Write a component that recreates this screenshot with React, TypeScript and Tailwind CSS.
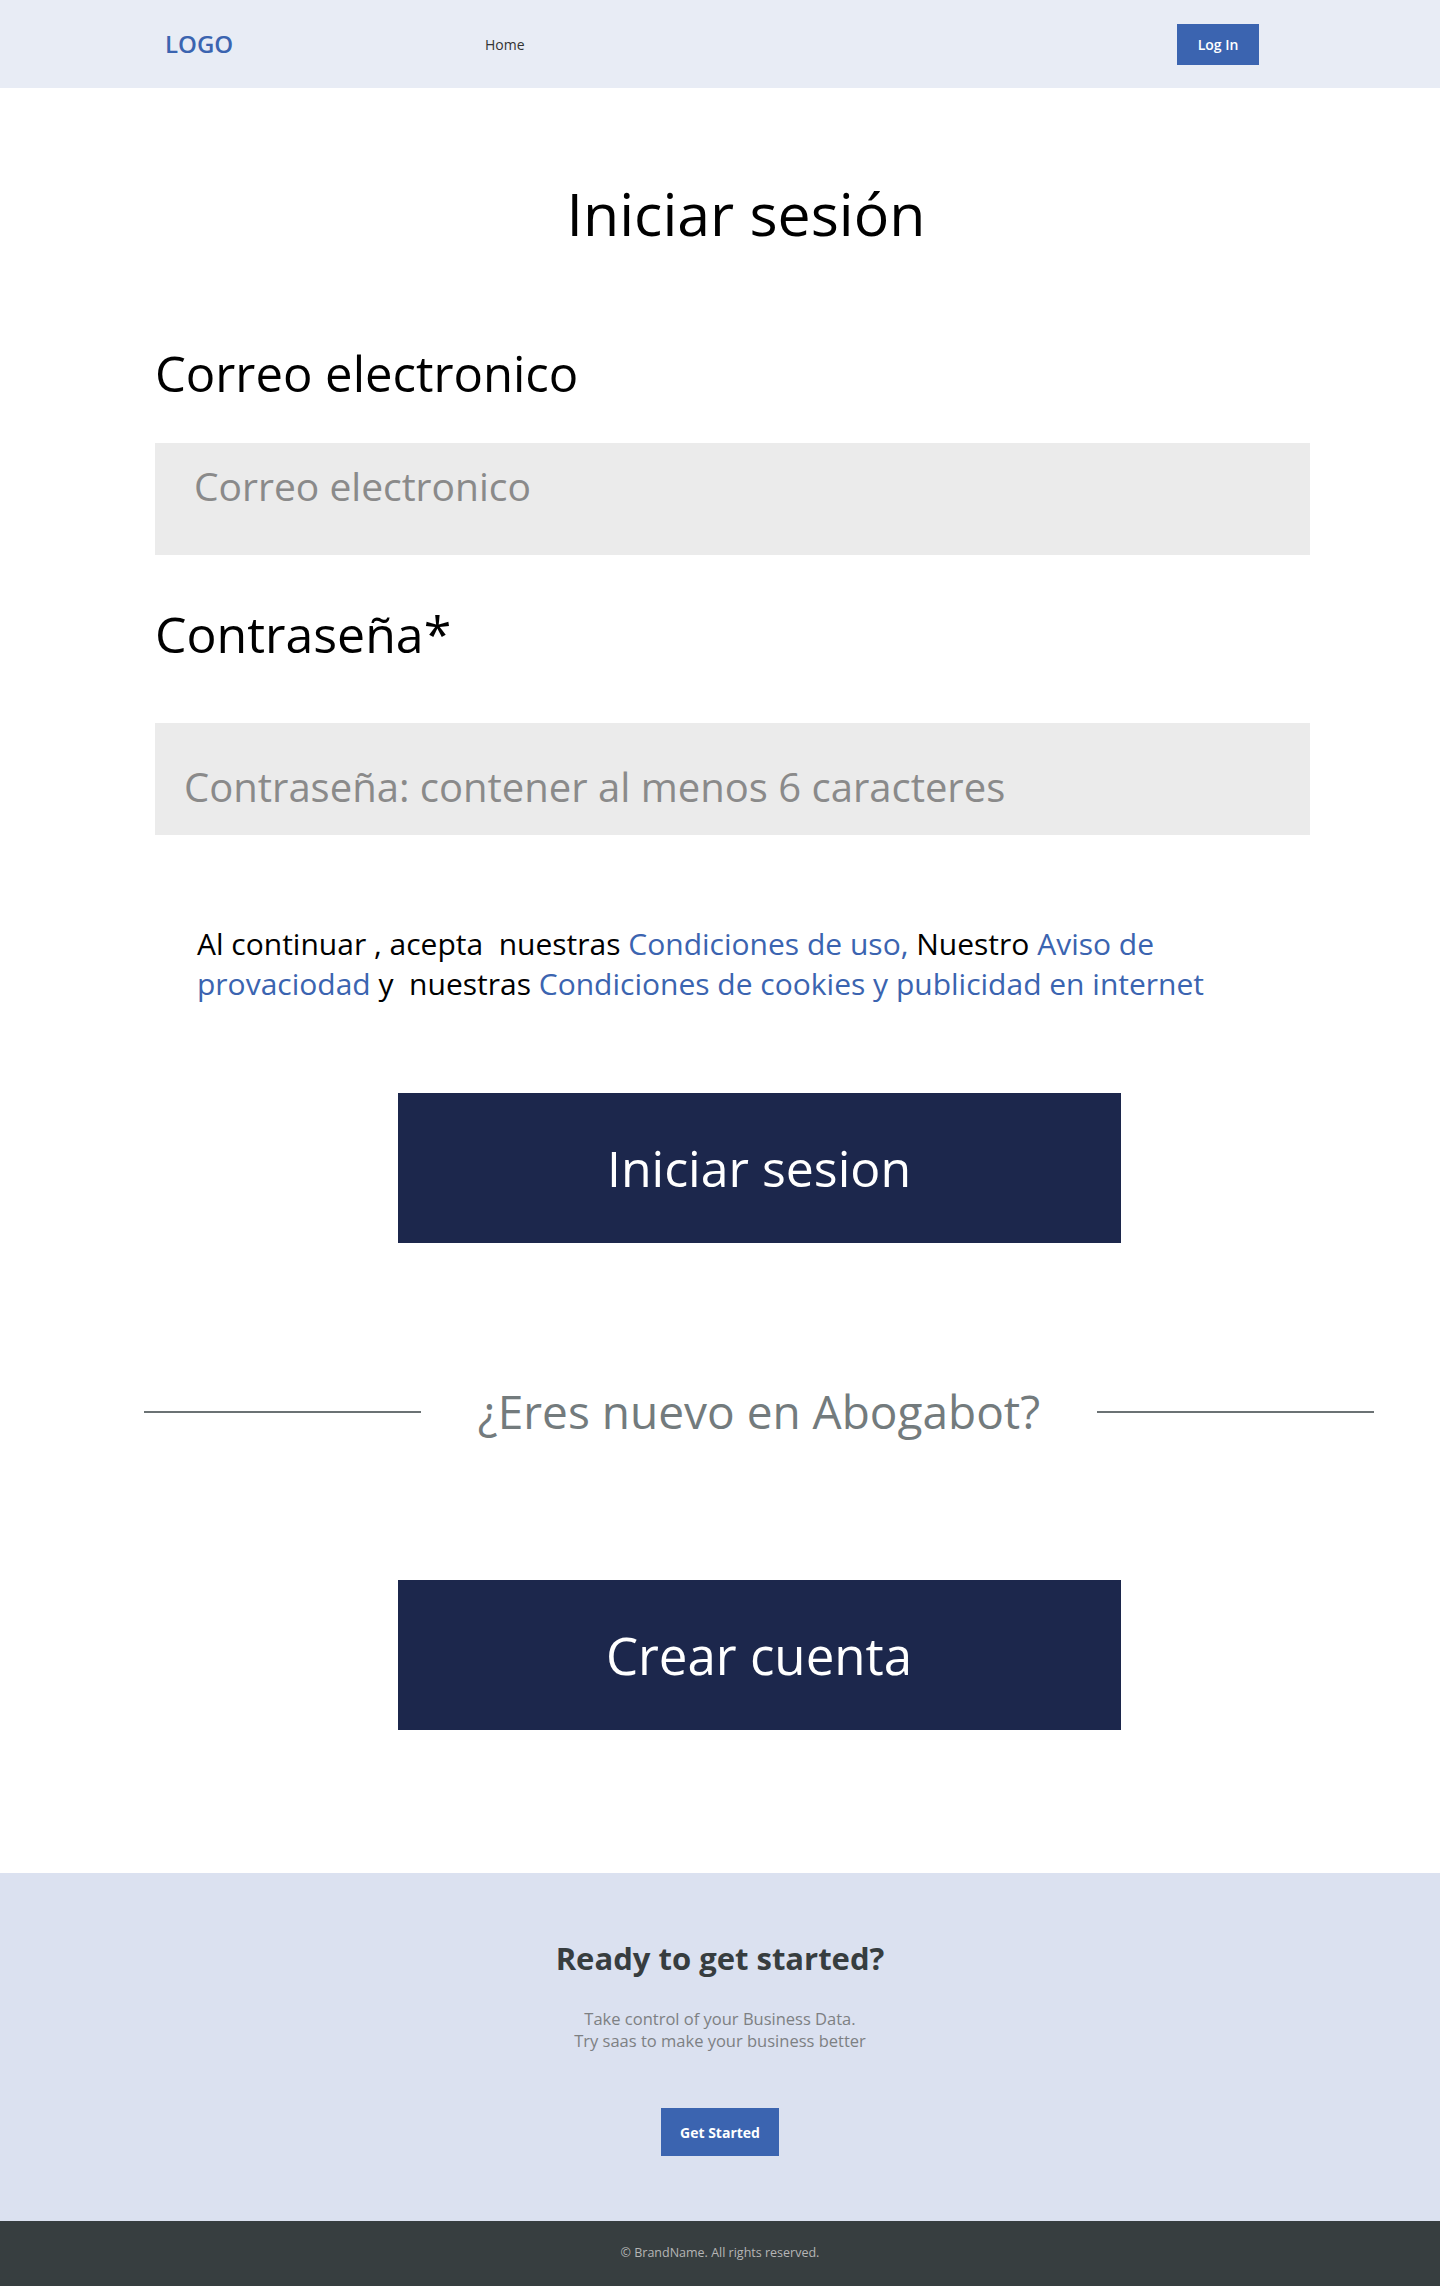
export default function App() {
  return (
    <div className="min-h-screen bg-white font-['Open_Sans','Liberation_Sans',sans-serif]">
      <header className="flex h-[88px] items-center bg-[#e8ecf5]">
        <div className="ml-[165px] w-[200px] text-[24px] font-semibold text-[#3b64b0]">LOGO</div>
        <nav className="ml-[120px] flex-1">
          <a className="text-[14px] text-[#333]" href="#">Home</a>
        </nav>
        <button className="mr-[181px] h-[41px] w-[82px] bg-[#3b64b0] text-[14px] font-semibold text-white">
          Log In
        </button>
      </header>

      <main className="ml-[144px] w-[1230px] pt-[90px] pb-[143px]">
        <h1 className="pr-[26px] text-center text-[59px] leading-[70px] text-black">Iniciar sesión</h1>

        <form className="ml-[11px] mt-[96px] w-[1155px]">
          <label className="block text-[49px] leading-[58px] text-black">Correo electronico</label>
          <input
            type="email"
            placeholder="Correo electronico"
            className="mt-[41px] block h-[112px] w-full bg-[#ebebeb] pb-[28px] pl-[39px] text-[39px] outline-none placeholder:text-[#8a8a8a]"
          />

          <label className="mt-[49px] block text-[50px] leading-[60px] text-black">Contraseña*</label>
          <input
            type="password"
            placeholder="Contraseña: contener al menos 6 caracteres"
            className="mt-[59px] block h-[112px] w-full bg-[#ebebeb] pt-[14px] pl-[29px] text-[40px] outline-none placeholder:text-[#8a8a8a]"
          />

          <p className="ml-[42px] mt-[89px] w-[1050px] text-[30px] leading-[40px] text-black">
            Al continuar , acepta&nbsp; nuestras <a href="#" className="text-[#3b64b0]">Condiciones de uso,</a> Nuestro{" "}
            <a href="#" className="text-[#3b64b0]">Aviso de provaciodad</a> y&nbsp; nuestras{" "}
            <a href="#" className="text-[#3b64b0]">Condiciones de cookies y publicidad en internet</a>
          </p>
        </form>

        <button className="mx-auto mt-[89px] block h-[150px] w-[723px] bg-[#1c274c] text-[50px] text-white">
          Iniciar sesion
        </button>

        <div className="mt-[141px] flex items-center justify-between">
          <div className="h-[2px] w-[277px] bg-[#6b7274]" />
          <span className="text-[46px] leading-[55px] text-[#737b7d]">¿Eres nuevo en Abogabot?</span>
          <div className="h-[2px] w-[277px] bg-[#6b7274]" />
        </div>

        <button className="mx-auto mt-[141px] block h-[150px] w-[723px] bg-[#1c274c] text-[51px] text-white">
          Crear cuenta
        </button>
      </main>

      <section className="flex h-[348px] flex-col items-center bg-[#dbe1f0] pt-[66px]">
        <h2 className="text-[31px] font-bold leading-[38px] text-[#373d3f]">Ready to get started?</h2>
        <p className="mt-[31px] text-center text-[16.5px] leading-[22px] text-[#7d8083]">
          Take control of your Business Data.
          <br />
          Try saas to make your business better
        </p>
        <button className="mt-[56px] h-[48px] w-[118px] bg-[#3b64b0] text-[14px] font-bold text-white">
          Get Started
        </button>
      </section>

      <footer className="flex h-[65px] items-center justify-center bg-[#373e40]">
        <span className="text-[12.5px] text-[#b5b5b5]">© BrandName. All rights reserved.</span>
      </footer>
    </div>
  );
}
